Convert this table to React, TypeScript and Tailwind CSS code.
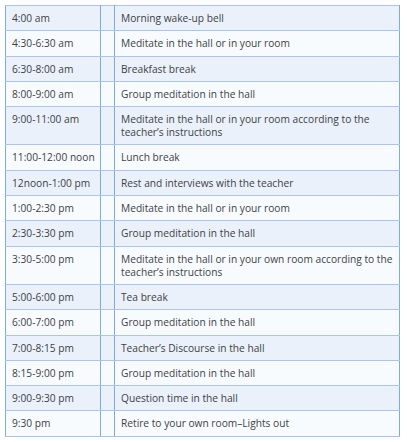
import React from 'react';

const rows: [string, string][] = [
  ['4:00 am', 'Morning wake-up bell'],
  ['4:30-6:30 am', 'Meditate in the hall or in your room'],
  ['6:30-8:00 am', 'Breakfast break'],
  ['8:00-9:00 am', 'Group meditation in the hall'],
  ['9:00-11:00 am', 'Meditate in the hall or in your room according to the teacher’s instructions'],
  ['11:00-12:00 noon', 'Lunch break'],
  ['12noon-1:00 pm', 'Rest and interviews with the teacher'],
  ['1:00-2:30 pm', 'Meditate in the hall or in your room'],
  ['2:30-3:30 pm', 'Group meditation in the hall'],
  ['3:30-5:00 pm', 'Meditate in the hall or in your own room according to the teacher’s instructions'],
  ['5:00-6:00 pm', 'Tea break'],
  ['6:00-7:00 pm', 'Group meditation in the hall'],
  ['7:00-8:15 pm', 'Teacher’s Discourse in the hall'],
  ['8:15-9:00 pm', 'Group meditation in the hall'],
  ['9:00-9:30 pm', 'Question time in the hall'],
  ['9:30 pm', 'Retire to your own room–Lights out'],
];

const App = () => {
  return (
    <div className="w-[407px] h-[442px] bg-white pt-[5px] pl-[5px] font-['Open_Sans',sans-serif]">
      {/* Schedule table */}
      <table className="w-[394px] table-fixed border-collapse border border-[#8eb0db] text-[10.2px] leading-[13px] text-[#3d4145]">
        <colgroup>
          <col className="w-[95px]" />
          <col className="w-[14px]" />
          <col className="w-[285px]" />
        </colgroup>
        <tbody>
          {rows.map(([time, what], i) => (
            <tr key={i} className={i % 2 === 0 ? 'bg-[#eaf1fa]' : 'bg-[#f8fbfe]'}>
              <td className="border-y border-y-[#a9c5ea] border-x border-x-[#7eaae4] pl-[6px] pr-0 pt-[6px] pb-[5.3px] align-top whitespace-nowrap">
                {time}
              </td>
              <td className="border-y border-y-[#a9c5ea] border-x border-x-[#7eaae4]" />
              <td className="border-y border-y-[#a9c5ea] border-x border-x-[#7eaae4] pl-[6px] pr-[1px] pt-[6px] pb-[5.3px] align-top">
                {what}
              </td>
            </tr>
          ))}
        </tbody>
      </table>
    </div>
  );
};

export default App;
